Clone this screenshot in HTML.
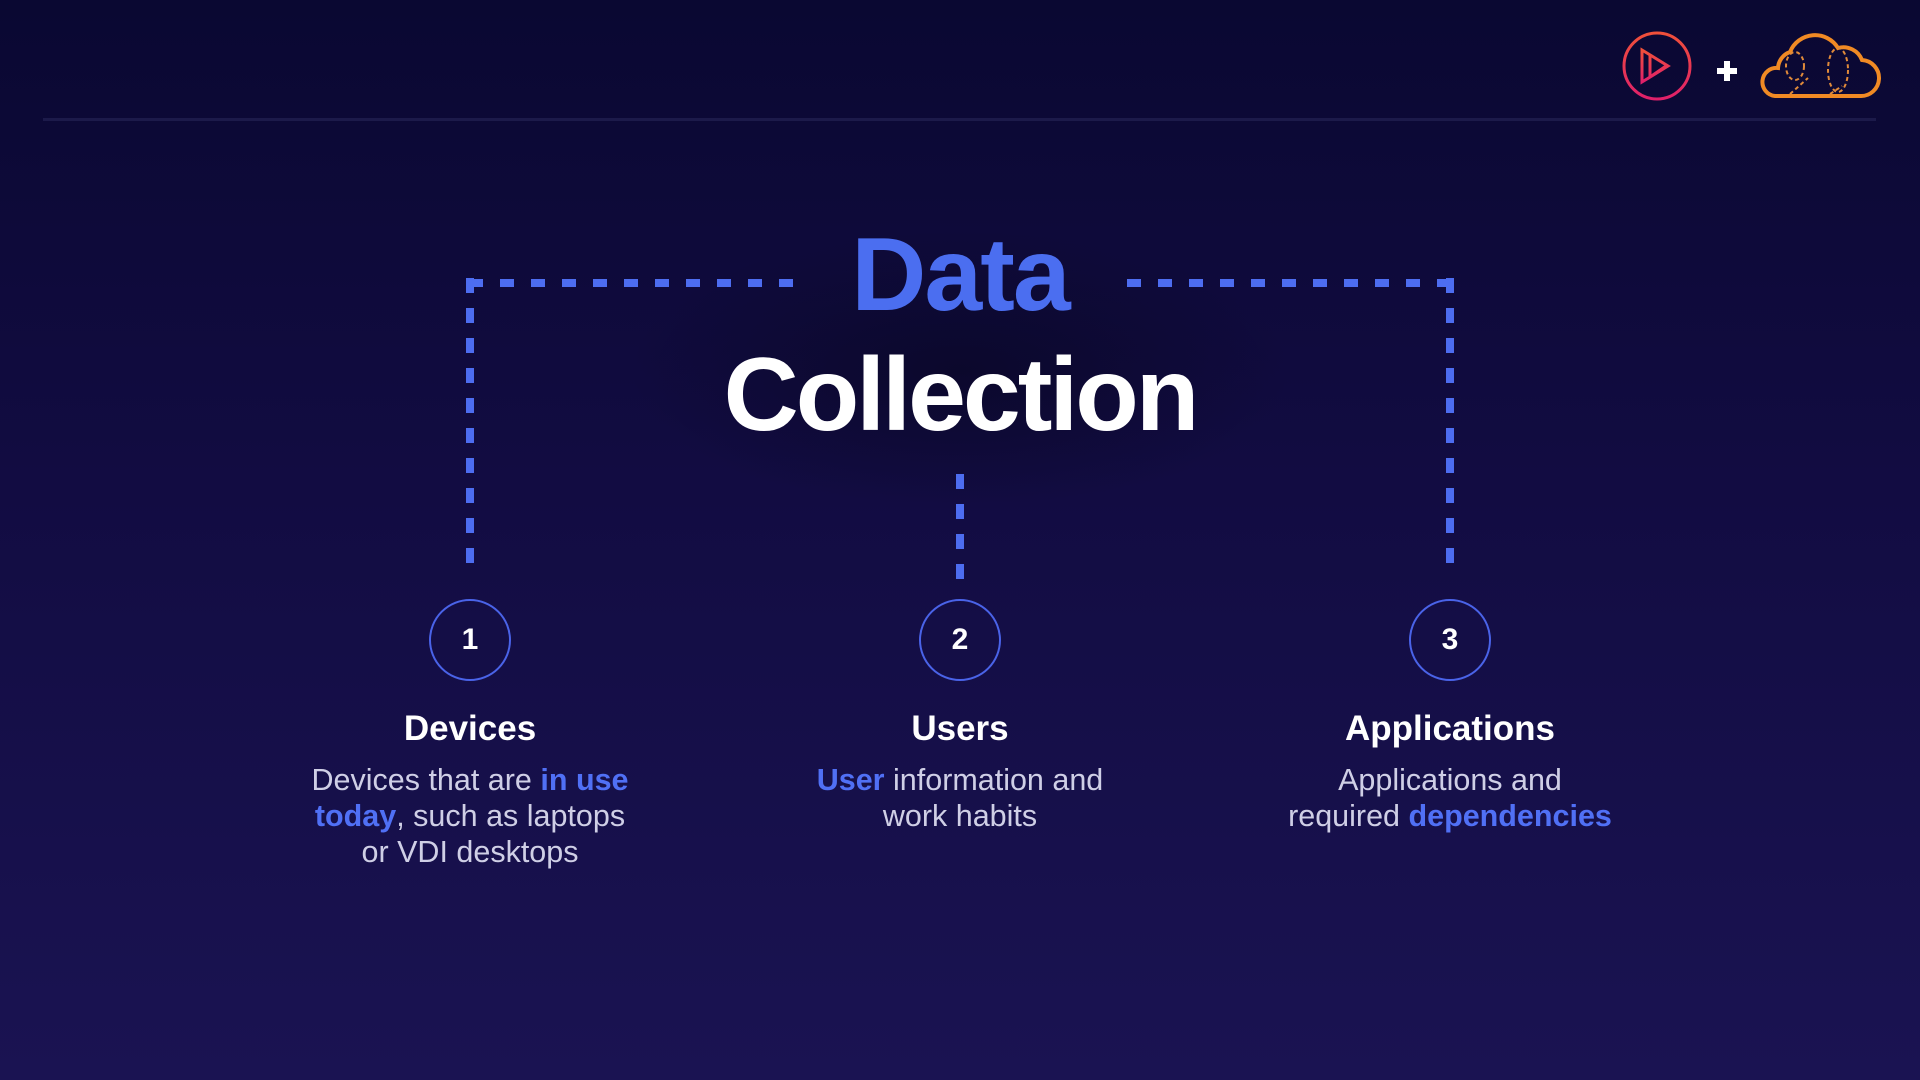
<!DOCTYPE html>
<html><head><meta charset="utf-8"><style>
*{margin:0;padding:0;box-sizing:border-box}
body{width:1920px;height:1080px;overflow:hidden;background:linear-gradient(180deg,#0a0832 0%,#120c42 45%,#1a1352 100%);font-family:"Liberation Sans",sans-serif;position:relative}
.abs{position:absolute}
.t{text-align:center;color:#fff;font-weight:bold}
.num{position:absolute;width:82px;height:82px;border:2px solid #4a63e8;border-radius:50%;color:#fff;font-weight:bold;font-size:30px;display:flex;align-items:center;justify-content:center;top:599px}
.h{position:absolute;width:440px;text-align:center;color:#fff;font-weight:bold;font-size:35px;top:709px}
.p{position:absolute;width:440px;text-align:center;color:#cfcfe6;font-size:30.5px;line-height:36px;top:762px}
.p b{color:#5070f5}
</style></head><body>
<div class="abs" style="left:43px;top:118px;width:1833px;height:3px;background:#1c1a4a"></div>
<svg class="abs" style="left:0;top:0" width="1920" height="1080">
<defs><linearGradient id="g" x1="0" y1="0" x2="0" y2="1"><stop offset="0" stop-color="#f0503a"/><stop offset="1" stop-color="#e0206a"/></linearGradient>
<radialGradient id="sh"><stop offset="0" stop-color="#080620" stop-opacity=".6"/><stop offset="1" stop-color="#080620" stop-opacity="0"/></radialGradient></defs>
<ellipse cx="960" cy="370" rx="330" ry="140" fill="url(#sh)"/>
<g stroke="#4d6df0" stroke-width="8" fill="none">
<path d="M793 283 H470" stroke-dasharray="14 17"/>
<path d="M1127 283 H1450" stroke-dasharray="14 17"/>
<path d="M470 278 V575" stroke-dasharray="15 15"/>
<path d="M1450 278 V575" stroke-dasharray="15 15"/>
<path d="M960 474 V585" stroke-dasharray="15 15"/>
</g>
<circle cx="1657" cy="66" r="33" fill="none" stroke="url(#g)" stroke-width="3"/>
<path d="M1642 50 L1642 82 L1668 66 Z M1650 55 L1650 77 L1666 66" fill="none" stroke="url(#g)" stroke-width="3"/>
<path d="M1717 71 H1737 M1727 61 V81" stroke="#fff" stroke-width="6"/>
<path d="M1775 96 H1860 A18 18 0 0 0 1862 60 A20 20 0 0 0 1838 48 A27 27 0 0 0 1790 52 A18 18 0 0 0 1778 68 A14 14 0 0 0 1775 96 Z" fill="none" stroke="#f08a24" stroke-width="4"/>
<g stroke="#e08a3a" stroke-width="2" stroke-dasharray="4 3" fill="none">
<ellipse cx="1795" cy="66" rx="9" ry="14"/><ellipse cx="1838" cy="70" rx="10" ry="22"/><path d="M1790 94 L1808 78 M1830 94 L1842 86"/>
</g>
</svg>
<div class="abs t" style="left:0;width:1920px;top:220px;font-size:104px;color:#4b6ef0;letter-spacing:-2px;line-height:110px">Data</div>
<div class="abs t" style="left:0;width:1920px;top:340px;font-size:104px;letter-spacing:-3px;line-height:110px">Collection</div>
<div class="num" style="left:429px">1</div>
<div class="num" style="left:919px">2</div>
<div class="num" style="left:1409px">3</div>
<div class="h" style="left:250px">Devices</div>
<div class="h" style="left:740px">Users</div>
<div class="h" style="left:1230px">Applications</div>
<div class="p" style="left:250px">Devices that are <b>in use<br>today</b>, such as laptops<br>or VDI desktops</div>
<div class="p" style="left:740px"><b>User</b> information and<br>work habits</div>
<div class="p" style="left:1230px">Applications and<br>required <b>dependencies</b></div>
</body></html>
